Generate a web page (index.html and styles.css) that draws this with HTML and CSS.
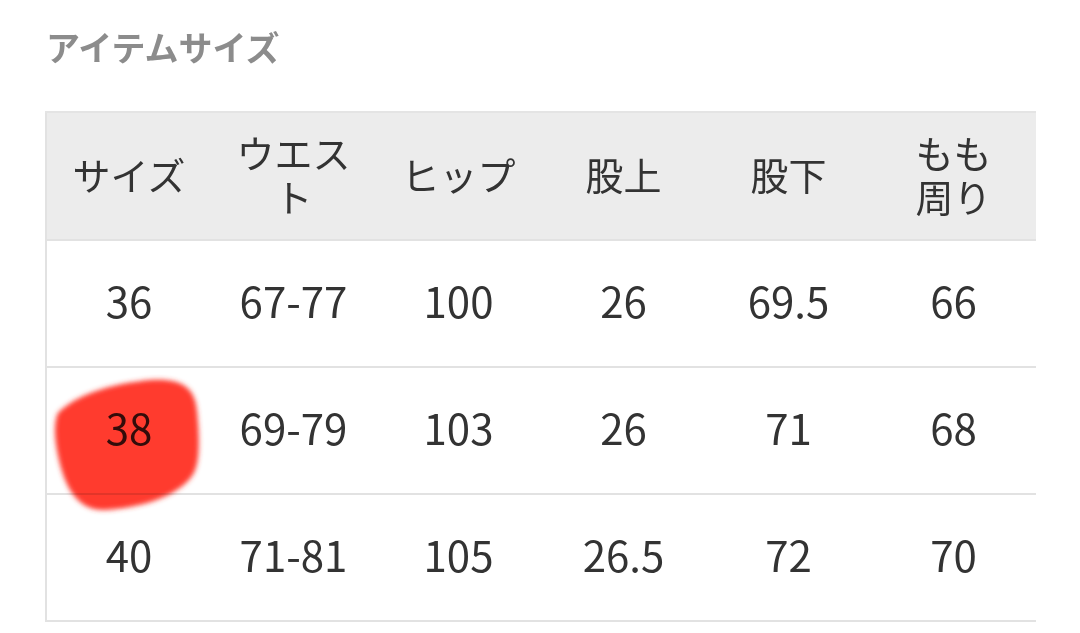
FILE: index.html
```html
<!DOCTYPE html>
<html lang="ja">
<head>
<meta charset="utf-8">
<link rel="stylesheet" href="styles.css">
</head>
<body>
<div class="page">
  <h2 class="title">アイテムサイズ</h2>
  <div class="table-wrap">
    <table class="size-table">
      <thead>
        <tr><th>サイズ</th><th>ウエスト</th><th>ヒップ</th><th>股上</th><th>股下</th><th>もも<br>周り</th></tr>
      </thead>
      <tbody>
        <tr><td>36</td><td>67-77</td><td>100</td><td>26</td><td>69.5</td><td>66</td></tr>
        <tr><td>38</td><td>69-79</td><td>103</td><td>26</td><td>71</td><td>68</td></tr>
        <tr><td>40</td><td>71-81</td><td>105</td><td>26.5</td><td>72</td><td>70</td></tr>
      </tbody>
    </table>
    <svg class="scribble" width="210" height="180" viewBox="0 0 210 180">
      <defs>
        <filter id="soft" x="-20%" y="-20%" width="140%" height="140%"><feGaussianBlur stdDeviation="2.5"/></filter>
      </defs>
      <path d="M38 52 C60 30 100 22 130 19 C160 17 175 25 177 50 C180 80 180 105 172 115 C160 132 130 146 85 149 C60 150 48 130 42 110 C36 90 32 65 38 52 Z" fill="#ff3a2e" filter="url(#soft)"/>
      <path d="M65 94 L128 94" stroke="#cc1512" stroke-width="12" stroke-linecap="round" filter="url(#soft)"/>
    </svg>
  </div>
</div>
</body>
</html>
```

FILE: styles.css
```css
html, body {
  margin: 0;
  padding: 0;
  background: #ffffff;
}
.page {
  width: 1080px;
  height: 633px;
  overflow: hidden;
  font-family: "Noto Sans CJK JP", "Noto Sans", sans-serif;
}
.title {
  margin: 0;
  padding: 25px 0 0 46px;
  height: 111px;
  box-sizing: border-box;
  font-size: 34px;
  line-height: 44px;
  font-weight: 700;
  color: #8c8c8c;
  letter-spacing: 0;
}
.table-wrap {
  position: relative;
  margin-left: 45px;
  width: 990px;
}
.size-table {
  border-collapse: collapse;
  width: 990px;
  table-layout: fixed;
  color: #333333;
}
.size-table th,
.size-table td {
  width: 165px;
  padding: 0 18px 5px;
  text-align: center;
  vertical-align: middle;
  box-sizing: border-box;
  font-size: 38px;
  line-height: 44px;
  font-weight: 400;
}
.size-table thead th {
  background: #ececec;
  height: 128px;
  border-top: 2px solid #e4e4e4;
}
.size-table tbody td {
  height: 127px;
  padding-bottom: 8px;
  border-top: 2px solid #e2e2e2;
  font-size: 42px;
}
.size-table tbody tr:last-child td {
  border-bottom: 2px solid #e2e2e2;
}
.size-table th:first-child,
.size-table td:first-child {
  border-left: 2px solid #e2e2e2;
}
.scribble {
  position: absolute;
  left: -25px;
  top: 250px;
  mix-blend-mode: multiply;
  pointer-events: none;
}
```
